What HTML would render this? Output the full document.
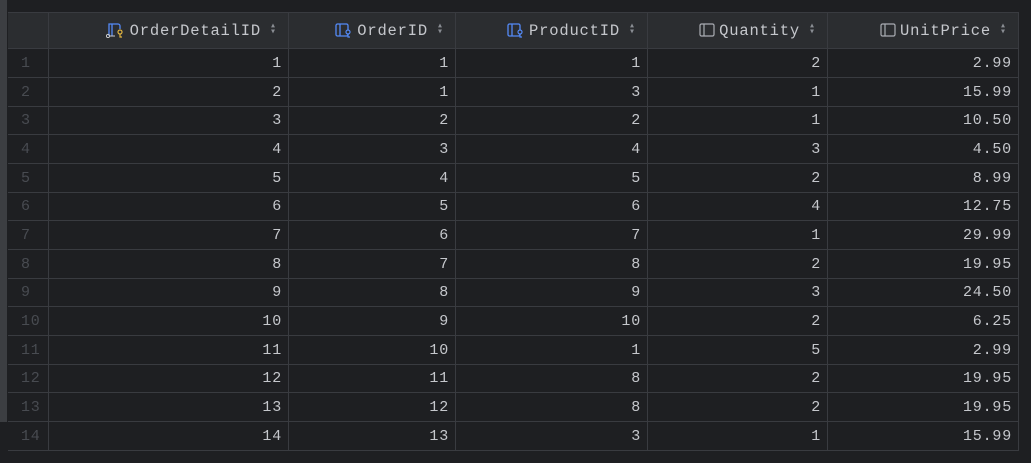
<!DOCTYPE html>
<html><head><style>
html,body{margin:0;padding:0;background:#1e1f22;width:1031px;height:463px;overflow:hidden}
.strip{position:absolute;left:0;top:0;width:7px;height:422px;background:#3c3e42}
table{position:absolute;left:8px;top:12px;border-collapse:collapse;table-layout:fixed;font-family:"Liberation Mono",monospace;font-size:15px;letter-spacing:0.8px;color:#c5c7cc}
td,th{border:1px solid #393b40;padding:0 6px 0 0;text-align:right;white-space:nowrap;overflow:hidden}
th{background:#2b2d30;height:35px;font-weight:normal;padding-right:12px;font-size:15.5px}
thead th:first-child{border-left-color:#2b2d30}
td.n{color:#484b51;text-align:left;padding-left:12px;border-left-color:#1e1f22}
.ic{display:inline-block;vertical-align:-3px;margin-right:4px}
.ar{display:inline-block;margin-left:9px;color:#8a8d93;font-size:10px;line-height:6px;vertical-align:1px;letter-spacing:0}
</style></head><body>
<div class="strip"></div>
<table>
<colgroup><col style="width:40px"><col style="width:240px"><col style="width:167px"><col style="width:192px"><col style="width:180px"><col style="width:191px"></colgroup>
<thead><tr><th></th>
<th><svg class="ic" width="20" height="16" viewBox="0 0 20 16"><path d="M3 14V2h9a2 2 0 0 1 2 2v3" fill="none" stroke="#548af7" stroke-width="1.3"/><path d="M6 2v12" stroke="#548af7" stroke-width="1.3"/><circle cx="2" cy="14" r="1.6" fill="none" stroke="#ccc" stroke-width="1"/><path d="M4 14h5" stroke="#ccc"/><circle cx="14" cy="10" r="2" fill="none" stroke="#e0b440" stroke-width="1.2"/><path d="M14 12v3h2" fill="none" stroke="#e0b440" stroke-width="1.2"/></svg>OrderDetailID<span class="ar">▴<br>▾</span></th>
<th><svg class="ic" width="18" height="16" viewBox="0 0 18 16"><rect x="1" y="2" width="12" height="12" rx="1.5" fill="none" stroke="#548af7" stroke-width="1.3"/><path d="M5 2v12" stroke="#548af7" stroke-width="1.3"/><circle cx="13" cy="10" r="2" fill="#2b2d30" stroke="#548af7" stroke-width="1.2"/><path d="M13 12v3h2" fill="none" stroke="#548af7" stroke-width="1.2"/></svg>OrderID<span class="ar">▴<br>▾</span></th>
<th><svg class="ic" width="18" height="16" viewBox="0 0 18 16"><rect x="1" y="2" width="12" height="12" rx="1.5" fill="none" stroke="#548af7" stroke-width="1.3"/><path d="M5 2v12" stroke="#548af7" stroke-width="1.3"/><circle cx="13" cy="10" r="2" fill="#2b2d30" stroke="#548af7" stroke-width="1.2"/><path d="M13 12v3h2" fill="none" stroke="#548af7" stroke-width="1.2"/></svg>ProductID<span class="ar">▴<br>▾</span></th>
<th><svg class="ic" width="16" height="16" viewBox="0 0 16 16"><rect x="1" y="2" width="14" height="12" rx="1.5" fill="none" stroke="#aaadb3" stroke-width="1.2"/><path d="M5 2v12" stroke="#aaadb3" stroke-width="1.2"/></svg>Quantity<span class="ar">▴<br>▾</span></th>
<th><svg class="ic" width="16" height="16" viewBox="0 0 16 16"><rect x="1" y="2" width="14" height="12" rx="1.5" fill="none" stroke="#aaadb3" stroke-width="1.2"/><path d="M5 2v12" stroke="#aaadb3" stroke-width="1.2"/></svg>UnitPrice<span class="ar">▴<br>▾</span></th>
</tr></thead>
<tbody>
<tr style="height:29px"><td class="n">1</td><td>1</td><td>1</td><td>1</td><td>2</td><td>2.99</td></tr>
<tr style="height:29px"><td class="n">2</td><td>2</td><td>1</td><td>3</td><td>1</td><td>15.99</td></tr>
<tr style="height:28px"><td class="n">3</td><td>3</td><td>2</td><td>2</td><td>1</td><td>10.50</td></tr>
<tr style="height:29px"><td class="n">4</td><td>4</td><td>3</td><td>4</td><td>3</td><td>4.50</td></tr>
<tr style="height:29px"><td class="n">5</td><td>5</td><td>4</td><td>5</td><td>2</td><td>8.99</td></tr>
<tr style="height:28px"><td class="n">6</td><td>6</td><td>5</td><td>6</td><td>4</td><td>12.75</td></tr>
<tr style="height:29px"><td class="n">7</td><td>7</td><td>6</td><td>7</td><td>1</td><td>29.99</td></tr>
<tr style="height:29px"><td class="n">8</td><td>8</td><td>7</td><td>8</td><td>2</td><td>19.95</td></tr>
<tr style="height:28px"><td class="n">9</td><td>9</td><td>8</td><td>9</td><td>3</td><td>24.50</td></tr>
<tr style="height:29px"><td class="n">10</td><td>10</td><td>9</td><td>10</td><td>2</td><td>6.25</td></tr>
<tr style="height:29px"><td class="n">11</td><td>11</td><td>10</td><td>1</td><td>5</td><td>2.99</td></tr>
<tr style="height:28px"><td class="n">12</td><td>12</td><td>11</td><td>8</td><td>2</td><td>19.95</td></tr>
<tr style="height:29px"><td class="n">13</td><td>13</td><td>12</td><td>8</td><td>2</td><td>19.95</td></tr>
<tr style="height:29px"><td class="n">14</td><td>14</td><td>13</td><td>3</td><td>1</td><td>15.99</td></tr>
</tbody></table>
</body></html>
